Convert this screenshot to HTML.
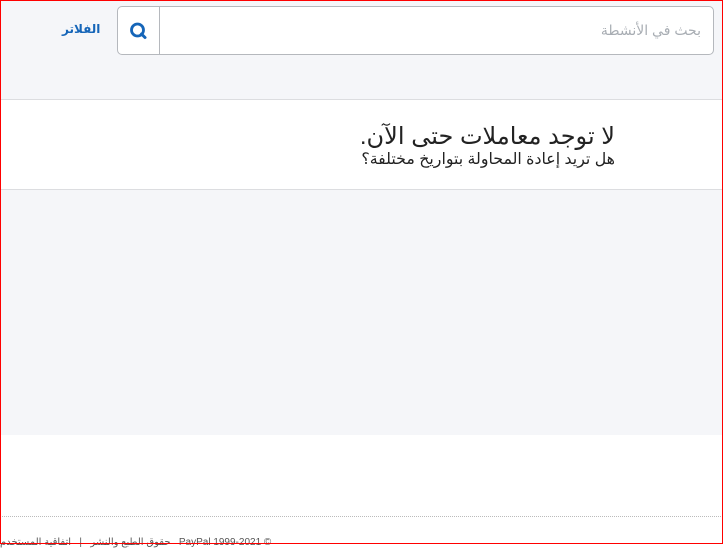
<!DOCTYPE html>
<html dir="rtl"><head><meta charset="utf-8"><style>
html,body{margin:0;padding:0}
body{width:723px;height:544px;position:relative;overflow:hidden;background:#fff;font-family:"Liberation Sans","DejaVu Sans",sans-serif}
.frame{position:absolute;left:0;top:0;width:721px;height:542px;border:1px solid #f00;z-index:10;pointer-events:none}
.top{position:absolute;left:0;top:0;width:723px;height:99px;background:#f5f6f9;border-bottom:1px solid #dcdde0}
.search{position:absolute;left:117px;top:6px;width:595px;height:47px;border:1px solid #b5b8bd;border-radius:5px;background:#fff}
.ic{position:absolute;left:0;top:0;width:41px;height:47px;border-right:1px solid #b5b8bd}
.ph{position:absolute;right:12px;top:15px;font-size:14px;color:#a8adb3}
.filt{position:absolute;left:62px;top:22px;font-size:12px;font-weight:bold;color:#1565b8}
.msg{position:absolute;left:0;top:100px;width:723px;height:89px;background:#fff;border-bottom:1px solid #dcdde0}
.h{position:absolute;right:108px;top:22px;font-size:24px;color:#222;white-space:nowrap}
.s{position:absolute;right:108px;top:49px;font-size:15.8px;color:#222;white-space:nowrap}
.gray{position:absolute;left:0;top:190px;width:723px;height:245px;background:#f5f6f9}
.dot{position:absolute;left:2px;top:516px;width:719px;border-top:1px dotted #bbb}
.foot{position:absolute;left:0;top:537px;width:470px;font-size:10px;color:#555;white-space:nowrap;direction:ltr}
</style></head><body>
<div class="top">
<div class="search"><div class="ic"><svg width="41" height="47" viewBox="0 0 41 47"><circle cx="19.5" cy="23" r="6" fill="none" stroke="#1565b8" stroke-width="2.8"/><line x1="23.5" y1="27" x2="27" y2="30.5" stroke="#1565b8" stroke-width="3" stroke-linecap="round"/></svg></div>
<div class="ph">بحث في الأنشطة</div></div>
<div class="filt">الفلاتر</div>
</div>
<div class="msg"><div class="h">لا توجد معاملات حتى الآن.</div><div class="s">هل تريد إعادة المحاولة بتواريخ مختلفة؟</div></div>
<div class="gray"></div>
<div class="dot"></div>
<div class="foot">حقوق الطبع والنشر &nbsp;&nbsp;|&nbsp;&nbsp; اتفاقية المستخدم &nbsp; PayPal 1999-2021 ©</div>
<div class="frame"></div>
</body></html>
